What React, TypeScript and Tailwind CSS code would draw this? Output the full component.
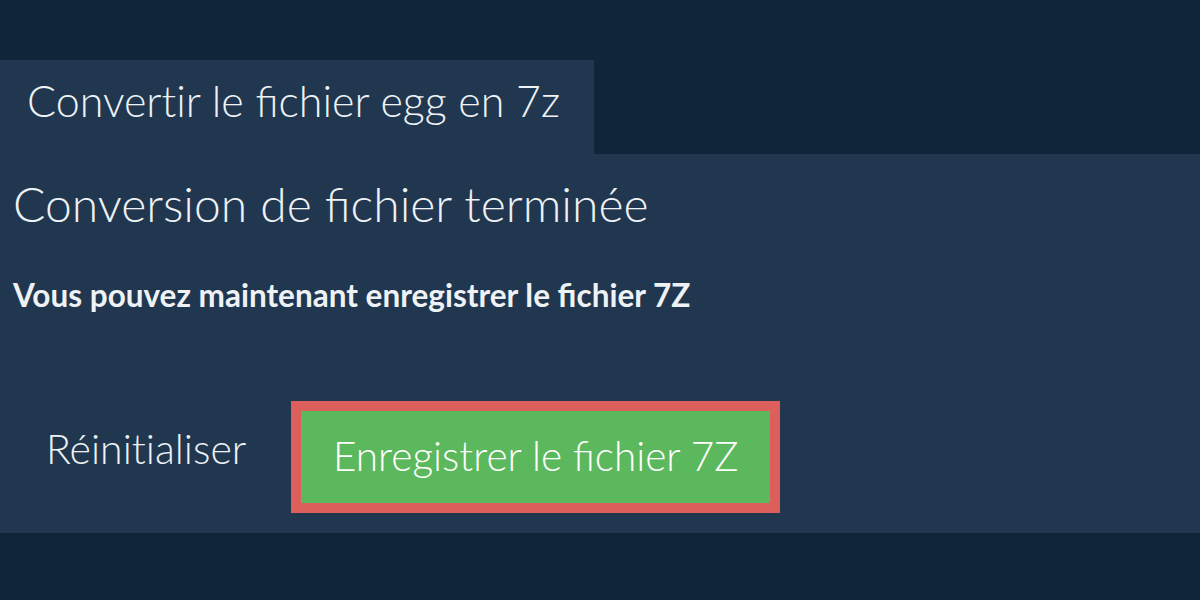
import React from "react";

const Z = "\u200C";

export default function App() {
  return (
    <div className="w-[1200px] h-[600px] bg-[#10243a] flex flex-col" style={{ fontFamily: "Lato, 'Noto Sans', sans-serif" }}>
      <div className="h-[60px]" />
      <div className="w-[594px] h-[94px] bg-[#213750] flex items-start pl-[27px] pt-[19px]">
        <span className="text-[43px] font-light text-[#eef2f5] leading-none">{`Convert${Z}ir le fichier egg en 7z`}</span>
      </div>
      <div className="h-[379px] bg-[#213750] flex flex-col px-[13px]">
        <h1 className="text-[48px] font-light text-[#eef2f5] leading-none mt-[26px]">Conversion de fichier terminée</h1>
        <p className="text-[31.5px] font-bold text-[#eef2f5] leading-none mt-[52px]">Vous pouvez maintenant enregistrer le fichier 7Z</p>
        <div className="flex items-start mt-[89px]">
          <button className="text-[41px] font-light text-[#eef2f5] leading-none pl-[33px] mt-[27px]">{`Réinit${Z}ialiser`}</button>
          <div className="ml-[45px] border-[10px] border-[#dc5f5c]">
            <div className="bg-[#5cb85c] w-[469px] h-[92px] flex items-center justify-center">
              <span className="text-[40.5px] font-light text-white leading-none">Enregistrer le fichier 7Z</span>
            </div>
          </div>
        </div>
      </div>
    </div>
  );
}
